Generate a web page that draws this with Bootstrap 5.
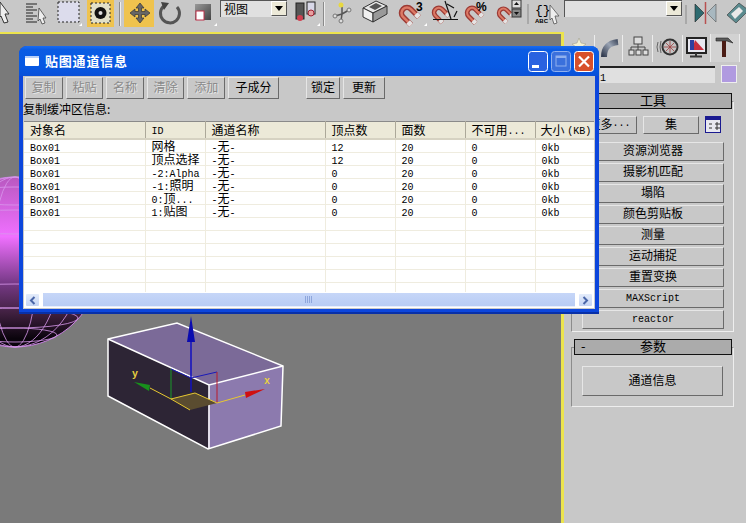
<!DOCTYPE html>
<html lang="zh-CN">
<head>
  <meta charset="UTF-8">
  <title>贴图通道信息</title>
  <link href="https://cdn.jsdelivr.net/npm/bootstrap@5.3.0/dist/css/bootstrap.min.css" rel="stylesheet">
  <style>
    html, body { margin: 0; height: 100%; overflow: hidden; background: #c8c8c8; }
    body, .btn { font-family: "Noto Sans CJK SC", "Liberation Sans", sans-serif; font-size: 12px; color: #000; }
    svg { display: block; flex: none; }
    .app { width: 746px; height: 523px; overflow: hidden; }

    /* top toolbar */
    .toolbar { height: 32px; flex: none; background: #c8c8c8; }
    .tb-drop { height: 17px; background: #e0e0e0; border-top: 1px solid #555; border-left: 1px solid #555; line-height: 15px; padding-left: 3px; flex: none; }
    .drop-view { width: 67px; margin-left: 1px; }
    .drop-sel { width: 118px; }
    .drop-arrow { width: 16px; height: 15px; background: #ece9d8; border: 1px solid; border-color: #fff #555 #555 #fff; }
    .drop-arrow::after { content: ""; border: 4px solid transparent; border-top: 5px solid #000; margin-top: 4px; }
    .tb-sep { width: 1px; height: 24px; background: #8a8a8a; border-right: 1px solid #eee; box-sizing: content-box; flex: none; }
    .sep-a { margin: 2px 2px 0 2px; }

    /* workspace */
    .workspace { height: 491px; }
    .viewport { width: 564px; flex: none; background: #7a7a7a; border-top: 2px solid #ece44e; border-right: 3px solid #ece44e; }
    .side { width: 182px; flex: none; background: #c8c8c8; padding-top: 2px; }
    .tabs { height: 28px; }
    .name-row { margin: 4px 9px 0 0; height: 17px; padding-left: 36px; }
    .name-input { width: 116px; height: 17px; background: #e0e0e0; border-top: 2px solid #222; line-height: 15px; }
    .swatch { width: 16px; height: 18px; background: #b09ae0; border: 1px solid #eee; margin: -1px 0 0 6px; }

    .roll-head { position: relative; z-index: 1; height: 16px; margin: 0 14px 0 10px; background: #ababab; border: 1px solid #111; line-height: 12px; font-size: 13px; text-align: center; }
    .roll-minus { position: absolute; left: 6px; top: 0; }
    .roll-box { margin: -8px 12px 0 7px; border: 1px solid #8c8c8c; border-right-color: #eee; border-bottom-color: #eee; padding: 14px 10px 0 10px; }
    .roll-one { margin-top: 10px; }
    .roll-two { margin-top: 7px; }
    .box-tools { height: 231px; }
    .box-params { height: 60px; padding-top: 18px; }

    .max-btn { display: flex; align-items: center; justify-content: center; padding: 0 0 3px; border-radius: 0; background: #c8c8c8; border: 1px solid; border-color: #e6e6e6 #6a6a6a #6a6a6a #e6e6e6; color: #000; font-size: 12px; line-height: 1; white-space: nowrap; }
    .max-btn:disabled { background: #c8c8c8; color: #8a8a8a; opacity: 1; border-color: #e6e6e6 #6a6a6a #6a6a6a #e6e6e6; text-shadow: 1px 1px 0 #e6e6e6; }
    .side-btn { height: 19px; width: 142px; margin-bottom: 2px; }
    .lat-btn { font-family: "Liberation Mono", monospace; font-size: 10px; padding: 1px 0 0; }
    .more-btn { width: 55px; height: 18px; }
    .set-btn { width: 56px; height: 18px; margin-left: 6px; }
    .conf-icon { margin-left: 6px; }
    .top-tools { height: 18px; margin-bottom: 8px; }
    .info-btn { width: 141px; height: 30px; font-size: 12px; }

    /* floating dialog */
    .dialog { position: absolute; left: 19px; top: 14px; width: 580px; height: 268px; z-index: 5; border-radius: 8px 8px 0 0; background: #0c46dc; border-bottom: 2px solid #0830a8; overflow: hidden; }
    .dlg-title { height: 30px; padding: 0 5px 0 6px; background: linear-gradient(#1a6cf0 0, #0a5ce4 12%, #0758e2 70%, #0a50d8 100%); color: #fff; font-weight: 700; font-size: 13px; }
    .dlg-text { margin-left: 6px; letter-spacing: .8px; }
    .dlg-btns { margin-left: auto; gap: 3px; }
    .dlg-body { height: 233px; margin: 0 4px 3px 4px; background: #c8c8c8; padding: 1px 0 0 0; }
    .btn-strip { height: 22px; padding-left: 2px; }
    .w37 { width: 37.6px; height: 22px; margin-right: 3px; }
    .w51 { width: 51px; height: 22px; }
    .w34 { width: 34px; height: 22px; margin-left: 27px; }
    .w42 { width: 42px; height: 22px; margin-left: 3px; }
    .buf-label { height: 22px; line-height: 20px; white-space: nowrap; }
    .list-wrap { height: 171px; width: 570px; margin-left: 1px; background: #fff; overflow: hidden; }
    .chan-table { table-layout: fixed; width: 570px; border-collapse: collapse; margin: 0; }
    .chan-table th { height: 17px; padding: 0 0 0 6px; font-weight: 400; background: #ece9d8; border-right: 1px solid #aca899; border-bottom: 2px solid #d6d2c2; border-top: 1px solid #8a8a8a; line-height: 14px; white-space: nowrap; overflow: hidden; }
    .chan-table th .lat { vertical-align: 1px; }
    .chan-table td { height: 13px; padding: 0 0 1px 6px; line-height: 11px; border-right: 1px solid #efecdf; border-bottom: 1px solid #efecdf; white-space: nowrap; }
    .chan-table th:nth-child(1) { width: 121px; }
    .chan-table th:nth-child(2) { width: 60px; }
    .chan-table th:nth-child(3) { width: 120px; }
    .chan-table th:nth-child(4), .chan-table th:nth-child(5), .chan-table th:nth-child(6), .chan-table th:nth-child(7) { width: 70px; }
    .chan-table th:nth-child(7) { padding-left: 5px; }
    .lat { font-family: "Liberation Mono", monospace; font-size: 10px; line-height: 0; }
    .hscroll { width: 570px; height: 16px; margin-left: 1px; background: #fff; padding: 1px; }
    .sc-btn { width: 15px; height: 14px; background: linear-gradient(#e4ecfb, #c4d4f4); border: 1px solid #fff; border-radius: 2px; }
    .sc-track { flex: 1; margin: 0 3px; background: linear-gradient(#c6d6f8, #b8ccf4); border-bottom: 1px solid #e8eefc; color: #8ea6dc; }
  </style>
</head>
<body>
<div class="app d-flex flex-column">

  <!-- main toolbar -->
  <div class="toolbar d-flex align-items-start">
    <svg width="20" height="32" viewBox="0 0 20 32">
      <polygon points="0,2 9,14 5,14 8,22 4,23 1,16 0,17" fill="#eee" stroke="#333"/>
      <defs>
        <g id="magnet">
          <path d="M19.900 14.100L11.900 6.100A5.500 5.500 0 0 0 4.100 13.900L12.100 21.900" fill="none" stroke="#9c3a34" stroke-width="5.500"/>
          <path d="M19.900 14.100L11.900 6.100A5.500 5.500 0 0 0 4.100 13.900L12.100 21.900" fill="none" stroke="#dc7a66" stroke-width="2.500"/>
          <path d="M19.900 14.100l-3-3M12.100 21.900l-3-3" fill="none" stroke="#e4e4e4" stroke-width="5"/>
        </g>
      </defs>
    </svg>
    <svg width="32" height="32" viewBox="20 0 32 32">
      <path d="M26 4h11M26 7h7M26 10h11M26 13h7M26 16h11M26 19h7M26 22h11" stroke="#222" stroke-width="1.200"/>
      <polygon points="39,8 46,18 43,18 45,23 42,24 40,19 38,21" fill="#eee" stroke="#444" stroke-width=".8"/>
    </svg>
    <svg width="32" height="32" viewBox="52 0 32 32">
      <rect x="58" y="2" width="21" height="20" fill="#dcdcec" stroke="#222" stroke-dasharray="2 2"/>
      <polygon points="82,23 82,26 79,26" fill="#fff"/>
    </svg>
    <svg width="33" height="32" viewBox="84 0 33 32">
      <rect x="87" y="0" width="27" height="27" fill="#efc34e"/>
      <rect x="91" y="3" width="19" height="20" fill="#e2e0c8" stroke="#222" stroke-dasharray="2 2"/>
      <circle cx="100.500" cy="13" r="6" fill="#111"/><circle cx="100.500" cy="13" r="2" fill="#ddd"/>
    </svg>
    <div class="tb-sep sep-a"></div>
    <svg width="32" height="32" viewBox="122 0 32 32">
      <rect x="123" y="0" width="30" height="27" fill="#efc34e"/>
      <path d="M139 3l4 5h-2.500v3.500H144v-2.500l5 4-5 4v-2.500h-3.500V18H143l-4 5-4-5h2.500v-3.500H134V17l-5-4 5-4v2.500h3.500V8H135z" fill="#666" stroke="#333" stroke-width=".7"/>
    </svg>
    <svg width="33" height="32" viewBox="154 0 33 32">
      <path d="M163 6a9.500 9.500 0 1 0 13 1" fill="none" stroke="#555" stroke-width="3"/>
      <polygon points="160,2 168,3 163,10" fill="#444"/>
    </svg>
    <svg width="31" height="32" viewBox="187 0 31 32">
      <defs><linearGradient id="sg" x1="0" x2="1" y1="0" y2="1"><stop offset="0" stop-color="#999"/><stop offset="1" stop-color="#444"/></linearGradient></defs>
      <rect x="194" y="4" width="16" height="16" fill="url(#sg)"/>
      <rect x="195" y="11" width="8" height="9" fill="#fff" stroke="#c0304a"/>
      <polygon points="216,23 216,26 213,26" fill="#fff"/>
    </svg>
    <div class="tb-drop drop-view d-flex justify-content-between">视图<span class="drop-arrow d-flex justify-content-center"></span></div>
    <svg width="34" height="32" viewBox="286 0 34 32">
      <rect x="295" y="3" width="8" height="16" fill="#555" stroke="#222"/><circle cx="299" cy="18" r="3" fill="#d04050"/>
      <rect x="306" y="2" width="8" height="12" fill="#d8d8e8" stroke="#222"/><circle cx="310" cy="13" r="3" fill="#e8a0a0" stroke="#a02030"/>
      <polygon points="319,23 319,26 316,26" fill="#fff"/>
    </svg>
    <div class="tb-sep sep-a"></div>
    <svg width="31" height="32" viewBox="326 0 31 32">
      <path d="M341 5v9M341 14l-7 2M341 14l7-4M341 14l-1 7" stroke="#555" stroke-width="1.500"/>
      <circle cx="340" cy="5" r="2.500" fill="#e8d840"/><circle cx="334" cy="16" r="2" fill="#ddd" stroke="#777"/><circle cx="348" cy="10" r="2" fill="#ddd" stroke="#777"/><circle cx="340" cy="21" r="2" fill="#ddd" stroke="#777"/>
    </svg>
    <svg width="38" height="32" viewBox="357 0 38 32">
      <polygon points="362,8 375,1 386,6 372,13" fill="#e8e8e8" stroke="#333"/>
      <polygon points="368,7 375,3 381,6 374,10" fill="#555"/>
      <polygon points="362,8 372,13 372,22 362,17" fill="#f0f0f0" stroke="#333"/>
      <polygon points="372,13 386,6 386,14 372,22" fill="#999" stroke="#333"/>
    </svg>
    <svg width="35" height="32" viewBox="395 0 35 32">
      <use href="#magnet" x="398" y="3"/>
      <text x="415" y="11" font-family="Liberation Sans" font-size="12" font-weight="700">3</text>
      <polygon points="426,23 426,26 423,26" fill="#fff"/>
    </svg>
    <svg width="33" height="32" viewBox="430 0 33 32">
      <use href="#magnet" transform="translate(431 4) scale(.85)"/>
      <path d="M444 1l6 18M432 19.500h25" fill="none" stroke="#111" stroke-width="1.200"/>
      <path d="M446 4l7 4M456 11l-3 6" fill="none" stroke="#111" stroke-width="1.200"/>
    </svg>
    <svg width="32" height="32" viewBox="463 0 32 32">
      <use href="#magnet" transform="translate(464 4) scale(.88)"/>
      <text x="475" y="11" font-family="Liberation Sans" font-size="12" font-weight="700">%</text>
    </svg>
    <svg width="31" height="32" viewBox="495 0 31 32">
      <use href="#magnet" transform="translate(496 5) scale(.8)"/>
      <rect x="511" y="0" width="9" height="8" fill="#ddd" stroke="#333"/><polygon points="513,5 518,5 515.500,2" fill="#111"/>
      <rect x="511" y="9" width="9" height="8" fill="#888" stroke="#333"/><polygon points="513,12 518,12 515.500,15" fill="#111"/>
    </svg>
    <svg width="37" height="32" viewBox="526 0 37 32">
      <path d="M527 4v20" stroke="#8a8a8a"/>
      <text x="534" y="14" font-family="Liberation Mono" font-size="13">{}</text>
      <text x="534" y="23" font-family="Liberation Sans" font-size="6" font-weight="700">ABC</text>
      <polygon points="549,5 558,16 554,16 556,23 553,24 551,18 549,20" fill="#eee" stroke="#555" stroke-width=".8"/>
    </svg>
    <div class="tb-drop drop-sel d-flex justify-content-end"><span class="drop-arrow d-flex justify-content-center"></span></div>
    <svg width="65" height="32" viewBox="681 0 65 32">
      <path d="M685 5v19" stroke="#8a8a8a"/>
      <polygon points="694,4 703,13 694,22" fill="#2c6a70" stroke="#222" stroke-width=".6"/>
      <polygon points="715,4 706,13 715,22" fill="#a8b8c0" stroke="#555" stroke-width=".6"/>
      <path d="M704.500 2v22" stroke="#b85050" stroke-width="1.500"/>
      <polygon points="726,15 738,3 746,9 746,12 735,23" fill="#5a8a8e" stroke="#333" stroke-width=".6"/>
      <polygon points="730,14 738,7 742,11 734,19" fill="#e8e8e8"/>
    </svg>
  </div>

  <div class="workspace d-flex position-relative">

    <!-- 3D viewport -->
    <div class="viewport">
      <svg width="561" height="489" viewBox="0 34 561 489">
        <defs>
          <linearGradient id="ballFill" x1="0" x2="0" y1="0" y2="1">
            <stop offset="0" stop-color="#b858c0"/>
            <stop offset=".35" stop-color="#f070ff"/>
            <stop offset=".62" stop-color="#783a88"/>
            <stop offset=".8" stop-color="#402040"/>
            <stop offset=".95" stop-color="#0a040c"/>
          </linearGradient>
        </defs>
        <circle cx="15" cy="262" r="85" fill="url(#ballFill)" stroke="#c880e0"/>
        <g fill="none" stroke="#d898ec" stroke-width=".8">
          <ellipse cx="15" cy="262" rx="22" ry="85"/>
          <ellipse cx="15" cy="262" rx="45" ry="85"/>
          <ellipse cx="15" cy="262" rx="66" ry="85"/>
          <ellipse cx="15" cy="196" rx="53" ry="9"/>
          <ellipse cx="15" cy="222" rx="74" ry="12"/>
          <ellipse cx="15" cy="296" rx="78" ry="12"/>
          <ellipse cx="15" cy="318" rx="63" ry="10"/>
          <ellipse cx="15" cy="335" rx="42" ry="7"/>
        </g>

        <!-- box with gizmo -->
        <polygon points="108,339 177,323 283,366 209,385" fill="#7b6a98"/>
        <polygon points="108,339 209,385 208,449 108,396" fill="#2d2535"/>
        <polygon points="209,385 283,366 281,426 208,449" fill="#8c7aae"/>
        <g fill="none" stroke="#fff" stroke-width="1.500">
          <polygon points="108,339 177,323 283,366 281,426 208,449 108,396"/>
          <path d="M108 339L209 385L283 366M209 385V449"/>
        </g>
        <polygon points="171,399 195,393 217,403 190,410" fill="#5a4c30"/>
        <path d="M171 369V399" stroke="#1a9a2a"/>
        <path d="M171 369l20 9 26-6" fill="none" stroke="#1a1ab8"/>
        <path d="M217 372V403" stroke="#b81a2a"/>
        <path d="M191 392V325" stroke="#1010c0" stroke-width="1.500"/>
        <polygon points="191,316 195,342 187,342" fill="#0a0ab0"/>
        <path d="M171 399L150 388M171 399l24-6 22 10M217 403l28-8M171 399l19 11" fill="none" stroke="#e8c830"/>
        <polygon points="134,382 150,385 149,391" fill="#18901c"/>
        <polygon points="265,389 245,392 246,398" fill="#d01010"/>
        <text x="132" y="377" font-family="Liberation Mono" font-size="10" font-weight="700" fill="#e8d040">y</text>
        <text x="264" y="384" font-family="Liberation Mono" font-size="10" font-weight="700" fill="#e8d040">x</text>
      </svg>
    </div>

    <!-- command panel -->
    <div class="side">
      <div class="tabs d-flex">
        <svg width="182" height="28" viewBox="564 34 182 28">
          <defs><linearGradient id="arcG" x1="0" x2="1" y1="1" y2="0"><stop offset="0" stop-color="#333c50"/><stop offset=".6" stop-color="#9aa4b4"/><stop offset="1" stop-color="#4a5468"/></linearGradient></defs>
          <rect x="711" y="34" width="28" height="28" fill="#d2d2d2"/>
          <path d="M594.500 35v27M622.500 35v27M652.500 35v27M682.500 35v27M710.500 34v28M739.500 34v28" stroke="#ececec"/>
          <polygon points="579,38 581,43 586,44 582,47 583,52 579,49 575,52 576,47 572,44 577,43" fill="#f4f0d0" stroke="#998" stroke-width=".5"/>
          <path d="M604 57c0-10 5-14 14-15" fill="none" stroke="url(#arcG)" stroke-width="6"/>
          <rect x="634" y="37" width="8" height="7" fill="#ddd" stroke="#444"/>
          <path d="M638 44v6M631 50v-3h14v3" stroke="#444" fill="none"/>
          <rect x="629" y="50" width="5" height="5" fill="#ddd" stroke="#444"/><rect x="636" y="50" width="5" height="5" fill="#ddd" stroke="#444"/><rect x="643" y="50" width="5" height="5" fill="#ddd" stroke="#444"/>
          <circle cx="670" cy="47" r="7.500" fill="#c4c4c4" stroke="#333" stroke-width="2"/>
          <path d="M670 41v12M664 47h12M666 43l8 8M674 43l-8 8" stroke="#a04040" stroke-width=".8"/>
          <path d="M658 42q-2 5 0 10M661 41q-2 6 0 12" fill="none" stroke="#666"/>
          <rect x="687" y="38" width="19" height="15" fill="#e8e8f0" stroke="#222" stroke-width="2"/>
          <polygon points="695,40 704,50 692,50" fill="#c83040"/><rect x="690" y="40" width="4" height="10" fill="#3040a0"/>
          <path d="M696 53v3M690 56.500h12" stroke="#333" stroke-width="2"/>
          <path d="M716 38h12l5 5-6-2h-11z" fill="#5a5a5a" stroke="#222" stroke-width=".6"/>
          <rect x="722" y="41" width="4" height="16" fill="#4a1c14"/>
        </svg>
      </div>
      <div class="name-row d-flex">
        <div class="name-input"><span class="lat">1</span></div>
        <div class="swatch"></div>
      </div>

      <div class="roll-head roll-one">工具</div>
      <div class="roll-box box-tools">
        <div class="top-tools d-flex">
          <button class="btn max-btn more-btn">更多<span class="lat">...</span></button>
          <button class="btn max-btn set-btn">集</button>
          <svg class="conf-icon" width="18" height="18" viewBox="0 0 18 18">
            <rect x=".5" y=".5" width="15" height="16" fill="#e8e8f0" stroke="#1a1a90"/>
            <rect x="1" y="1" width="14" height="3" fill="#1a1a90"/>
            <path d="M4 8h3M4 12h3M10 8h5M10 12h5M12 6v4M12 10v4" stroke="#333"/>
          </svg>
        </div>
        <button class="btn max-btn side-btn">资源浏览器</button>
        <button class="btn max-btn side-btn">摄影机匹配</button>
        <button class="btn max-btn side-btn">塌陷</button>
        <button class="btn max-btn side-btn">颜色剪贴板</button>
        <button class="btn max-btn side-btn">测量</button>
        <button class="btn max-btn side-btn">运动捕捉</button>
        <button class="btn max-btn side-btn">重置变换</button>
        <button class="btn max-btn side-btn lat-btn">MAXScript</button>
        <button class="btn max-btn side-btn lat-btn">reactor</button>
      </div>

      <div class="roll-head roll-two"><span class="roll-minus">-</span>参数</div>
      <div class="roll-box box-params">
        <button class="btn max-btn info-btn">通道信息</button>
      </div>
    </div>

    <!-- floating dialog -->
    <div class="dialog">
      <div class="dlg-title d-flex align-items-center">
        <svg width="14" height="10" viewBox="0 0 14 10"><rect width="14" height="10" rx="1" fill="#fff"/><rect width="14" height="2" fill="#b8d0f8"/></svg>
        <span class="dlg-text">贴图通道信息</span>
        <div class="dlg-btns d-flex">
          <svg width="20" height="21" viewBox="0 0 20 21"><rect x=".5" y=".5" width="19" height="20" rx="3" fill="#2a62e0" stroke="#fff"/><rect x="4" y="14" width="7" height="3" fill="#fff"/></svg>
          <svg width="20" height="21" viewBox="0 0 20 21"><rect x=".5" y=".5" width="19" height="20" rx="3" fill="#3a70dc" stroke="#8fb0ee"/><rect x="5" y="5" width="10" height="10" fill="none" stroke="#8fb0ee"/><rect x="5" y="5" width="10" height="2" fill="#8fb0ee"/></svg>
          <svg width="20" height="21" viewBox="0 0 20 21"><rect x=".5" y=".5" width="19" height="20" rx="3" fill="#d8502a" stroke="#fff"/><path d="M5 5.500l10 10M15 5.500l-10 10" stroke="#fff" stroke-width="2.200"/></svg>
        </div>
      </div>
      <div class="dlg-body">
        <div class="btn-strip d-flex">
          <button class="btn max-btn w37" disabled>复制</button>
          <button class="btn max-btn w37" disabled>粘贴</button>
          <button class="btn max-btn w37" disabled>名称</button>
          <button class="btn max-btn w37" disabled>清除</button>
          <button class="btn max-btn w37" disabled>添加</button>
          <button class="btn max-btn w51">子成分</button>
          <button class="btn max-btn w34">锁定</button>
          <button class="btn max-btn w42">更新</button>
        </div>
        <div class="buf-label">复制缓冲区信息:</div>
        <div class="list-wrap">
          <table class="chan-table">
            <thead>
              <tr><th>对象名</th><th><span class="lat">ID</span></th><th>通道名称</th><th>顶点数</th><th>面数</th><th>不可用<span class="lat">...</span></th><th>大小 <span class="lat">(KB)</span></th></tr>
            </thead>
            <tbody id="rows"></tbody>
          </table>
        </div>
        <div class="hscroll d-flex">
          <div class="sc-btn d-flex align-items-center justify-content-center">
            <svg width="7" height="9" viewBox="0 0 7 9"><path d="M5.500 1L2 4.500 5.500 8" fill="none" stroke="#4a66a8" stroke-width="2"/></svg>
          </div>
          <div class="sc-track d-flex align-items-center justify-content-center">
            <svg width="8" height="7" viewBox="0 0 8 7"><path d="M.5 0v7M2.500 0v7M4.500 0v7M6.500 0v7" stroke="#8ea6dc"/></svg>
          </div>
          <div class="sc-btn d-flex align-items-center justify-content-center">
            <svg width="7" height="9" viewBox="0 0 7 9"><path d="M1.500 1L5 4.500 1.500 8" fill="none" stroke="#4a66a8" stroke-width="2"/></svg>
          </div>
        </div>
      </div>
    </div>
  </div>
</div>

<script src="https://cdn.jsdelivr.net/npm/bootstrap@5.3.0/dist/js/bootstrap.bundle.min.js"></script>
<script>
  const data = [
    ['网格', '12'],
    ['顶点选择', '12'],
    ['<span class="lat">-2:Alpha</span>', '0'],
    ['<span class="lat">-1:</span>照明', '0'],
    ['<span class="lat">0:</span>顶<span class="lat">...</span>', '0'],
    ['<span class="lat">1:</span>贴图', '0']
  ];
  let html = '';
  data.forEach(d => {
    html += `<tr><td><span class="lat">Box01</span></td><td>${d[0]}</td><td><span class="lat">-</span>无<span class="lat">-</span></td><td><span class="lat">${d[1]}</span></td><td><span class="lat">20</span></td><td><span class="lat">0</span></td><td><span class="lat">0kb</span></td></tr>`;
  });
  // empty rows down to the scrollbar
  for (let i = 0; i < 6; i++) {
    html += '<tr><td></td><td></td><td></td><td></td><td></td><td></td><td></td></tr>';
  }
  document.getElementById('rows').innerHTML = html;
</script>
</body>
</html>
